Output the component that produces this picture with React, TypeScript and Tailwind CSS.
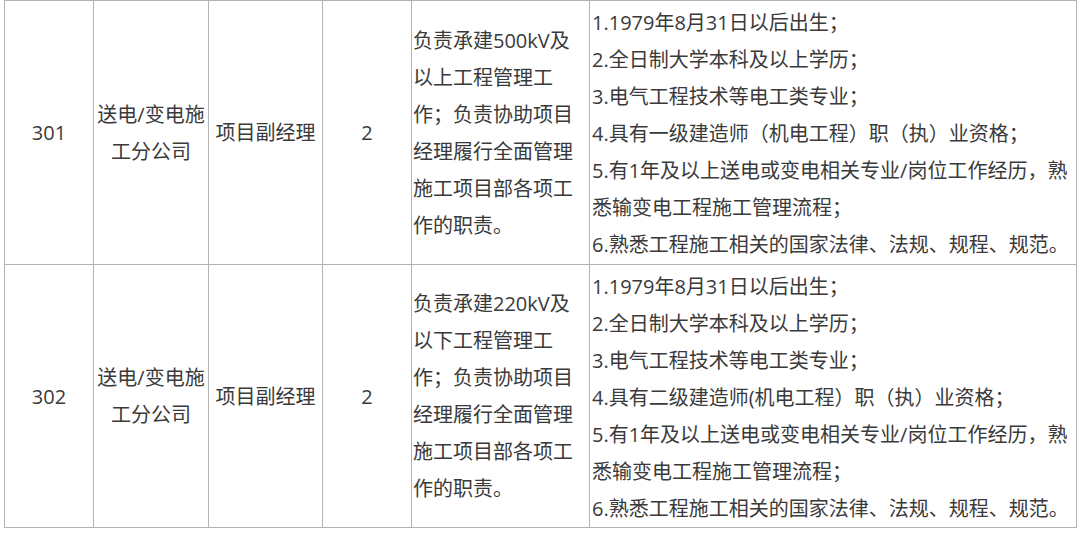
const font = { fontFamily: '"Open Sans", "Noto Sans CJK SC", sans-serif' }

interface Post {
  code: string
  dept: string[]
  title: string
  count: string
  duties: string[]
  reqs: string[]
}

const posts: Post[] = [
  {
    code: '301',
    dept: ['送电/变电施', '工分公司'],
    title: '项目副经理',
    count: '2',
    duties: [
      '负责承建500kV及',
      '以上工程管理工',
      '作；负责协助项目',
      '经理履行全面管理',
      '施工项目部各项工',
      '作的职责。',
    ],
    reqs: [
      '1.1979年8月31日以后出生；',
      '2.全日制大学本科及以上学历；',
      '3.电气工程技术等电工类专业；',
      '4.具有一级建造师（机电工程）职（执）业资格；',
      '5.有1年及以上送电或变电相关专业/岗位工作经历，熟',
      '悉输变电工程施工管理流程；',
      '6.熟悉工程施工相关的国家法律、法规、规程、规范。',
    ],
  },
  {
    code: '302',
    dept: ['送电/变电施', '工分公司'],
    title: '项目副经理',
    count: '2',
    duties: [
      '负责承建220kV及',
      '以下工程管理工',
      '作；负责协助项目',
      '经理履行全面管理',
      '施工项目部各项工',
      '作的职责。',
    ],
    reqs: [
      '1.1979年8月31日以后出生；',
      '2.全日制大学本科及以上学历；',
      '3.电气工程技术等电工类专业；',
      '4.具有二级建造师(机电工程）职（执）业资格；',
      '5.有1年及以上送电或变电相关专业/岗位工作经历，熟',
      '悉输变电工程施工管理流程；',
      '6.熟悉工程施工相关的国家法律、法规、规程、规范。',
    ],
  },
]

const cell = 'border border-[#b4b4b4] align-middle p-0'

export default function App() {
  return (
    <div className="w-[1080px] h-[535px] bg-white overflow-hidden" style={font}>
      <table className="ml-[4px] table-fixed border-collapse text-[20px] leading-[37px] text-[#3a3a3a]">
        <colgroup>
          <col className="w-[89px]" />
          <col className="w-[115px]" />
          <col className="w-[114px]" />
          <col className="w-[89px]" />
          <col className="w-[178px]" />
          <col className="w-[487px]" />
        </colgroup>
        <tbody>
          {posts.map((p, i) => (
            <tr key={p.code} className={i === 0 ? 'h-[264px]' : 'h-[263px]'}>
              <td className={`${cell} text-center`}>{p.code}</td>
              <td className={`${cell} text-center`}>
                {p.dept.map((line) => (
                  <div key={line} className="whitespace-nowrap">{line}</div>
                ))}
              </td>
              <td className={`${cell} text-center whitespace-nowrap`}>{p.title}</td>
              <td className={`${cell} text-center`}>{p.count}</td>
              <td className={`${cell} pl-[1px]`}>
                {p.duties.map((line) => (
                  <div key={line} className="whitespace-nowrap">{line}</div>
                ))}
              </td>
              <td className={`${cell} align-top pl-[2px] pt-[3px]`}>
                {p.reqs.map((line) => (
                  <div key={line} className="whitespace-nowrap">{line}</div>
                ))}
              </td>
            </tr>
          ))}
        </tbody>
      </table>
    </div>
  )
}
